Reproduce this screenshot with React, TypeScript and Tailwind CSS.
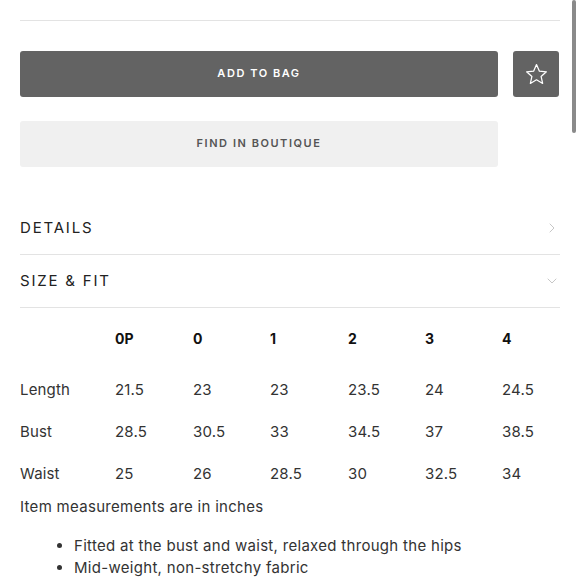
import { ChevronRight, ChevronDown } from 'lucide-react';

const sizes = ['0P', '0', '1', '2', '3', '4'];
const rows = [
  { label: 'Length', values: ['21.5', '23', '23', '23.5', '24', '24.5'] },
  { label: 'Bust', values: ['28.5', '30.5', '33', '34.5', '37', '38.5'] },
  { label: 'Waist', values: ['25', '26', '28.5', '30', '32.5', '34'] },
];

const StarIcon = () => (
  <svg width="25" height="25" viewBox="0 0 24 24" fill="none" stroke="white" strokeWidth="1.2" strokeLinejoin="round">
    <path d="M12 2.5l2.8 6.3 6.7.6-5.1 4.5 1.5 6.7L12 17.1l-5.9 3.5 1.5-6.7-5.1-4.5 6.7-.6z" />
  </svg>
);

const Section = ({ title, open }: { title: string; open?: boolean }) => (
  <div className="flex h-[53px] items-center justify-between border-b border-[#e3e3e3]">
    <span className="text-[15px] tracking-[0.12em] text-[#222]">{title}</span>
    {open ? (
      <ChevronDown size={16} strokeWidth={1} color="#aaa" />
    ) : (
      <ChevronRight size={16} strokeWidth={1} color="#aaa" />
    )}
  </div>
);

const App = () => {
  return (
    <div className="relative h-[580px] w-[580px] overflow-hidden bg-white font-['Inter',sans-serif] text-[#333]">
      <div className="absolute right-[4px] top-0 h-[133px] w-[4px] rounded-full bg-[#8a8a8a]" />
      <div className="ml-[20px] mr-[20px] pt-[20px]">
        <div className="border-t border-[#e3e3e3]" />
        <div className="mt-[30px] flex gap-[15px]">
          <button className="flex h-[46px] w-[478px] items-center justify-center rounded-[3px] bg-[#636363] pb-[1px] text-[11px] font-semibold tracking-[0.14em] text-white">
            ADD TO BAG
          </button>
          <button className="flex h-[46px] w-[46px] items-center justify-center rounded-[3px] bg-[#636363]">
            <StarIcon />
          </button>
        </div>
        <button className="mt-[24px] flex h-[46px] w-[478px] items-center justify-center rounded-[3px] bg-[#f0f0f0] pb-[1px] text-[11px] font-semibold tracking-[0.14em] text-[#555]">
          FIND IN BOUTIQUE
        </button>
        <div className="mt-[35px]">
          <Section title="DETAILS" />
          <Section title="SIZE & FIT" open />
        </div>
        <div className="mt-[20px] grid grid-cols-[95px_78px_77px_78px_77px_77px_1fr] text-[15px] tracking-[0.01em] text-[#333]">
          <div />
          {sizes.map((s) => (
            <div key={s} className="h-[20px] text-[14px] font-bold text-[#111]">
              {s}
            </div>
          ))}
          {rows.map((r, i) => (
            <>
              <div key={r.label} className={i === 0 ? 'mt-[31px] h-[42px]' : 'h-[42px]'}>
                {r.label}
              </div>
              {r.values.map((v, j) => (
                <div key={j} className={i === 0 ? 'mt-[31px] h-[42px]' : 'h-[42px]'}>
                  {v}
                </div>
              ))}
            </>
          ))}
        </div>
        <p className="-mt-[9px] text-[15px] tracking-[0.02em]">Item measurements are in inches</p>
        <ul className="mt-[16px] list-disc pl-[54px] text-[15px] leading-[22px] tracking-[0.02em]">
          <li>Fitted at the bust and waist, relaxed through the hips</li>
          <li>Mid-weight, non-stretchy fabric</li>
        </ul>
      </div>
    </div>
  );
};

export default App;
